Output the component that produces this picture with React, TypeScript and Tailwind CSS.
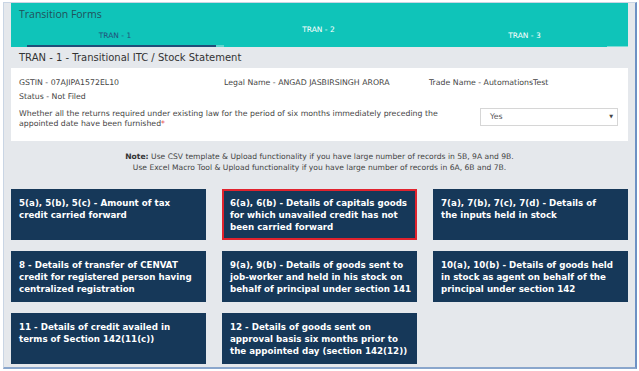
import React from "react";

const boxes: { lines: string[]; active?: boolean }[] = [
  { lines: ["5(a), 5(b), 5(c) - Amount of tax", "credit carried forward"] },
  { lines: ["6(a), 6(b) - Details of capitals goods", "for which unavailed credit has not", "been carried forward"], active: true },
  { lines: ["7(a), 7(b), 7(c), 7(d) - Details of", "the inputs held in stock"] },
  { lines: ["8 - Details of transfer of CENVAT", "credit for registered person having", "centralized registration"] },
  { lines: ["9(a), 9(b) - Details of goods sent to", "job-worker and held in his stock on", "behalf of principal under section 141"] },
  { lines: ["10(a), 10(b) - Details of goods held", "in stock as agent on behalf of the", "principal under section 142"] },
  { lines: ["11 - Details of credit availed in", "terms of Section 142(11(c))"] },
  { lines: ["12 - Details of goods sent on", "approval basis six months prior to", "the appointed day (section 142(12))"] },
];

export default function App() {
  return (
    <div className="w-[639px] h-[371px] bg-white pt-[2px] pl-[3px] overflow-hidden" style={{ fontFamily: '"DejaVu Sans", Verdana, sans-serif' }}>
      <div className="w-[634px] h-[367px] bg-[#e5e8ec] border-l border-t border-[#c9d5e4] border-r-2 border-b-2 border-r-[#6d91c4] border-b-[#8aa6cc] pl-[7px] pr-[7px]">
        {/* teal header */}
        <div className="h-[44px] bg-[#0fc4b9] flex flex-col">
          <div className="pl-[8px] pt-[4px] text-[10.5px] leading-[14px] text-[#21505a]" style={{ fontFamily: '"Open Sans", sans-serif' }}>
            Transition Forms
          </div>
          <div className="flex flex-1">
            <div className="w-[202px] ml-[3px] relative flex justify-center">
              <span className="text-[7.5px] text-[#22507a] mt-[9px]">TRAN - 1</span>
              <div className="absolute left-[13px] right-0 bottom-0 h-[2px] bg-[#1f4e79]" />
              <div className="absolute right-[-8px] w-[8px] bottom-0 h-[2px] bg-[#5fd6ce]" />
            </div>
            <div className="w-[205px] flex justify-center">
              <span className="text-[7.5px] text-white mt-[3px]">TRAN - 2</span>
            </div>
            <div className="flex-1 relative flex justify-center">
              <span className="text-[7.5px] text-white mt-[9px]">TRAN - 3</span>
              <div className="absolute right-0 w-[21px] bottom-0 h-[1px] bg-[#7ddcd5]" />
            </div>
          </div>
        </div>
        {/* title */}
        <div className="h-[21px] flex items-center pl-[8px] text-[10px] text-[#333]">
          TRAN - 1 - Transitional ITC / Stock Statement
        </div>
        {/* white card */}
        <div className="bg-white h-[73px] pl-[8px] pr-[10px] pt-[8px] text-[7.8px] text-[#444]">
          <div className="flex h-[13px] items-center">
            <div className="w-[205px]">GSTIN - 07AJIPA1572EL10</div>
            <div className="w-[205px]">Legal Name - ANGAD JASBIRSINGH ARORA</div>
            <div>Trade Name - AutomationsTest</div>
          </div>
          <div className="h-[16px] flex items-center">Status - Not Filed</div>
          <div className="flex items-start justify-between">
            <div className="w-[425px] leading-[10px] pt-[4px]">
              Whether all the returns required under existing law for the period of six months immediately preceding the appointed date have been furnished<span className="text-[#e4262d]">*</span>
            </div>
            <div className="w-[138px] h-[18px] border border-[#d6d6d6] flex items-center justify-between pl-[9px] pr-[4px] mt-[3px]">
              <span className="text-[#555]">Yes</span>
              <span className="text-[5px] text-[#444]">▼</span>
            </div>
          </div>
        </div>
        {/* note */}
        <div className="pt-[11px] h-[48px] text-center text-[7.6px] leading-[10.5px] text-[#444]">
          <div><b className="text-[#333]">Note:</b> Use CSV template &amp; Upload functionality if you have large number of records in 5B, 9A and 9B.</div>
          <div>Use Excel Macro Tool &amp; Upload functionality if you have large number of records in 6A, 6B and 7B.</div>
        </div>
        {/* boxes */}
        <div className="grid grid-cols-3 gap-x-[16px] gap-y-[11px]">
          {boxes.map((b, i) => (
            <div
              key={i}
              className={
                b.active
                  ? "h-[51px] bg-[#163859] border-2 border-[#e0232e] pl-[6px] pt-[6px] text-white font-bold text-[8.7px] leading-[12px] whitespace-nowrap overflow-hidden"
                  : "h-[51px] bg-[#163859] pl-[8px] pt-[8px] text-white font-bold text-[8.7px] leading-[12px] whitespace-nowrap overflow-hidden"
              }
            >
              {b.lines.map((l, j) => (
                <div key={j}>{l}</div>
              ))}
            </div>
          ))}
        </div>
      </div>
    </div>
  );
}
